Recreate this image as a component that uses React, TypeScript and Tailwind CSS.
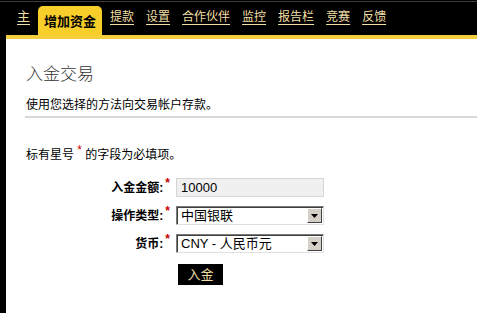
import React from "react";

const navLinks = ["提款", "设置", "合作伙伴", "监控", "报告栏", "竞赛", "反馈"];

function SelectBox({ value }: { value: string }) {
  return (
    <div className="w-[148px] h-[19px] flex items-center bg-white border border-t-[#7a7a7a] border-l-[#7a7a7a] border-r-[#e0e0e0] border-b-[#e0e0e0] shadow-[inset_1px_1px_0_#404040]">
      <span className="flex-1 pl-[4px] text-[13px] leading-[17px] text-black">{value}</span>
      <div className="w-[15px] h-[15px] mr-px bg-[#d4d0c8] border border-t-white border-l-white border-r-[#404040] border-b-[#404040] flex items-center justify-center">
        <svg width="7" height="4" viewBox="0 0 7 4">
          <path d="M0 0h7L3.5 4z" fill="#000" />
        </svg>
      </div>
    </div>
  );
}

function Star() {
  return <span className="text-[#cc0000] text-[12px] leading-none relative top-[-5px] ml-[2px]">*</span>;
}

export default function App() {
  return (
    <div
      className="min-h-screen bg-black flex flex-col"
      style={{ fontFamily: "'Liberation Sans', 'Noto Sans CJK SC', sans-serif" }}
    >
      <div className="mt-px h-px bg-[#3c3c3c]" />

      {/* nav */}
      <div className="h-[33px] flex items-end pl-[17px]">
        <a className="text-[13px] leading-[18px] text-[#f2dfa4] underline underline-offset-[3px] mb-[9px] mr-[8px]">主</a>
        <div className="h-[29px] bg-[#f8cf2a] rounded-t-[5px] px-[6px] flex items-center">
          <span className="text-[13px] font-bold text-black pt-[2px]">增加资金</span>
        </div>
        {navLinks.map((l, i) => (
          <a
            key={l}
            className={
              "text-[12px] leading-[18px] text-[#f2dfa4] underline underline-offset-[3px] mb-[9px] " +
              (i === 0 ? "ml-[8px]" : "ml-[12px]")
            }
          >
            {l}
          </a>
        ))}
      </div>
      <div className="ml-[6px] h-[4px] bg-[#f5cf3a]" />

      {/* content */}
      <div className="ml-[6px] flex-1 bg-white pt-[26px] text-[#222]">
        <div className="pl-[20px]">
          <h1 className="text-[17px] leading-[20px] font-light text-[#333]">入金交易</h1>
          <p className="mt-[12px] text-[12px] leading-[16px] text-black">使用您选择的方法向交易帐户存款。</p>
        </div>
        <div className="ml-[19px] mt-[3px] h-[2px] bg-[#d8d8d8]" />

        <p className="pl-[20px] mt-[29px] text-[12px] leading-[16px] text-black">
          标有星号 <span className="text-[#cc0000] relative top-[-5px]">*</span> 的字段为必填项。
        </p>

        <div className="mt-[15px] flex flex-col gap-[9px]">
          <div className="flex items-center">
            <div className="w-[164px] text-right text-[12px] font-bold text-black">
              入金金额:<Star />
            </div>
            <div className="ml-[6px] w-[148px] h-[19px] bg-[#f0f0f0] border border-[#d6d6d6] pl-[4px] text-[13px] leading-[17px] text-black">
              10000
            </div>
          </div>
          <div className="flex items-center">
            <div className="w-[164px] text-right text-[12px] font-bold text-black">
              操作类型:<Star />
            </div>
            <div className="ml-[6px]">
              <SelectBox value="中国银联" />
            </div>
          </div>
          <div className="flex items-center">
            <div className="w-[164px] text-right text-[12px] font-bold text-black">
              货币:<Star />
            </div>
            <div className="ml-[6px]">
              <SelectBox value="CNY - 人民币元" />
            </div>
          </div>
        </div>

        <div className="mt-[9px] pl-[172px]">
          <button className="w-[45px] h-[21px] bg-black text-[#f2dfa4] text-[13px] leading-[21px]">入金</button>
        </div>
      </div>
    </div>
  );
}
